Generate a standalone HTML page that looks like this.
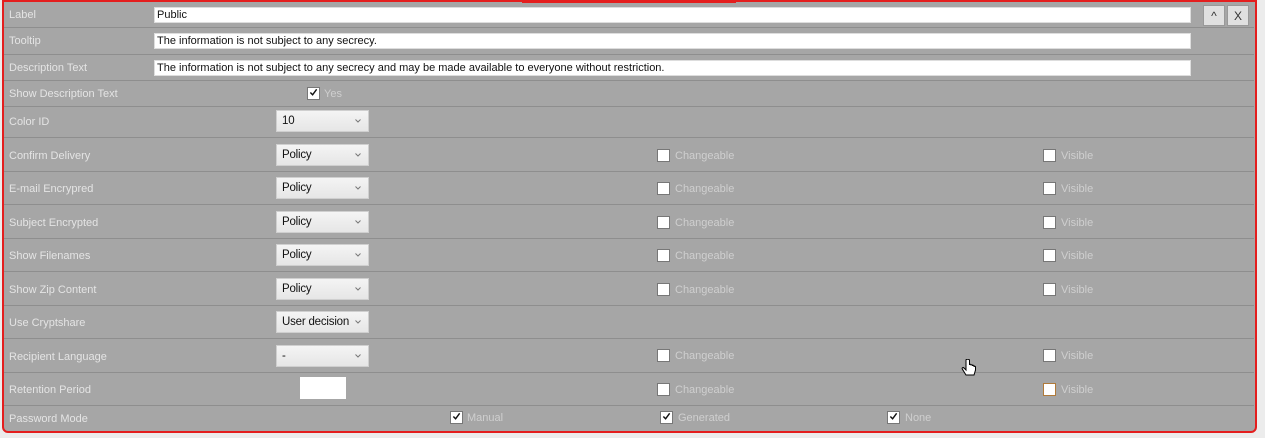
<!DOCTYPE html>
<html><head><style>
body{margin:0;width:1265px;height:438px;background:#ececec;position:relative;overflow:hidden;font-family:"Liberation Sans",sans-serif;}
.panel{position:absolute;left:2px;top:0;width:1251px;height:429px;background:#a6a6a6;border:2px solid #e41e1e;border-radius:0 0 6px 6px;}
.sep{position:absolute;left:4px;width:1250px;height:1px;background:#8e8e8e;}
.lbl{position:absolute;left:9px;font-size:11px;color:#e4e4e4;transform:translateY(-40%);white-space:nowrap;}
.inp{position:absolute;left:154px;width:1037px;background:#fff;border:1px solid #ddd;font-size:11px;color:#111;line-height:15px;padding-left:2px;box-sizing:border-box;height:16px;}
.sel{position:absolute;left:276px;width:93px;height:22px;background:linear-gradient(#f4f4f4,#e6e6e6);border:1px solid #cfcfcf;box-sizing:border-box;font-size:11.5px;color:#111;line-height:20px;padding-left:5px;letter-spacing:-0.2px;}
.sel svg{position:absolute;right:7px;top:8px;}
.cb{position:absolute;width:11px;height:11px;background:#fff;border:1px solid #777;}
.cbt{position:absolute;font-size:11px;color:#cfcfcf;white-space:nowrap;margin-top:1px;}
.chk{position:absolute;left:1px;top:0;width:9px;height:9px;}
.btn{position:absolute;top:5px;width:22px;height:21px;background:#e0e0e0;border:1px solid #999;box-sizing:border-box;font-size:12px;color:#333;text-align:center;line-height:20px;}
</style></head><body>
<div style="position:absolute;left:522px;top:0;width:210px;height:1px;border:2px solid #e41e1e;border-top:none;z-index:3"></div>
<div class="panel"></div>
<div class="sep" style="top:27px"></div><div class="sep" style="top:54px"></div><div class="sep" style="top:80px"></div><div class="sep" style="top:106px"></div><div class="sep" style="top:137px"></div><div class="sep" style="top:171px"></div><div class="sep" style="top:204px"></div><div class="sep" style="top:238px"></div><div class="sep" style="top:271px"></div><div class="sep" style="top:305px"></div><div class="sep" style="top:338px"></div><div class="sep" style="top:372px"></div><div class="sep" style="top:405px"></div>

<div class="lbl" style="top:14px">Label</div>
<div class="lbl" style="top:40px">Tooltip</div>
<div class="lbl" style="top:67px">Description Text</div>
<div class="lbl" style="top:93px">Show Description Text</div>
<div class="lbl" style="top:121px">Color ID</div>
<div class="lbl" style="top:155px">Confirm Delivery</div>
<div class="lbl" style="top:188px">E-mail Encrypred</div>
<div class="lbl" style="top:222px">Subject Encrypted</div>
<div class="lbl" style="top:255px">Show Filenames</div>
<div class="lbl" style="top:289px">Show Zip Content</div>
<div class="lbl" style="top:322px">Use Cryptshare</div>
<div class="lbl" style="top:356px">Recipient Language</div>
<div class="lbl" style="top:389px">Retention Period</div>
<div class="lbl" style="top:418px">Password Mode</div>

<div class="inp" style="top:7px">Public</div>
<div class="inp" style="top:33px">The information is not subject to any secrecy.</div>
<div class="inp" style="top:60px">The information is not subject to any secrecy and may be made available to everyone without restriction.</div>
<div class="btn" style="left:1203px">^</div><div class="btn" style="left:1227px">X</div>

<div class="cb" style="left:307px;top:87px"><svg class="chk" viewBox="0 0 10 10"><path d="M1.5 5L4 7.5L8.5 1.5" stroke="#111" stroke-width="1.6" fill="none"/></svg></div><div class="cbt" style="left:324px;top:87px">Yes</div>

<div class="sel" style="top:110px">10<svg width="6" height="4"><path d="M0.5 0.5L3 3L5.5 0.5" stroke="#777" fill="none"/></svg></div>
<div class="sel" style="top:144px">Policy<svg width="6" height="4"><path d="M0.5 0.5L3 3L5.5 0.5" stroke="#777" fill="none"/></svg></div>
<div class="sel" style="top:177px">Policy<svg width="6" height="4"><path d="M0.5 0.5L3 3L5.5 0.5" stroke="#777" fill="none"/></svg></div>
<div class="sel" style="top:211px">Policy<svg width="6" height="4"><path d="M0.5 0.5L3 3L5.5 0.5" stroke="#777" fill="none"/></svg></div>
<div class="sel" style="top:244px">Policy<svg width="6" height="4"><path d="M0.5 0.5L3 3L5.5 0.5" stroke="#777" fill="none"/></svg></div>
<div class="sel" style="top:278px">Policy<svg width="6" height="4"><path d="M0.5 0.5L3 3L5.5 0.5" stroke="#777" fill="none"/></svg></div>
<div class="sel" style="top:311px">User decision<svg width="6" height="4"><path d="M0.5 0.5L3 3L5.5 0.5" stroke="#777" fill="none"/></svg></div>
<div class="sel" style="top:345px">-<svg width="6" height="4"><path d="M0.5 0.5L3 3L5.5 0.5" stroke="#777" fill="none"/></svg></div>
<div style="position:absolute;left:300px;top:377px;width:46px;height:22px;background:#fff"></div>

<div class="cb" style="left:657px;top:149px"></div><div class="cbt" style="left:675px;top:149px">Changeable</div><div class="cb" style="left:1043px;top:149px"></div><div class="cbt" style="left:1061px;top:149px">Visible</div>
<div class="cb" style="left:657px;top:182px"></div><div class="cbt" style="left:675px;top:182px">Changeable</div><div class="cb" style="left:1043px;top:182px"></div><div class="cbt" style="left:1061px;top:182px">Visible</div>
<div class="cb" style="left:657px;top:216px"></div><div class="cbt" style="left:675px;top:216px">Changeable</div><div class="cb" style="left:1043px;top:216px"></div><div class="cbt" style="left:1061px;top:216px">Visible</div>
<div class="cb" style="left:657px;top:249px"></div><div class="cbt" style="left:675px;top:249px">Changeable</div><div class="cb" style="left:1043px;top:249px"></div><div class="cbt" style="left:1061px;top:249px">Visible</div>
<div class="cb" style="left:657px;top:283px"></div><div class="cbt" style="left:675px;top:283px">Changeable</div><div class="cb" style="left:1043px;top:283px"></div><div class="cbt" style="left:1061px;top:283px">Visible</div>
<div class="cb" style="left:657px;top:349px"></div><div class="cbt" style="left:675px;top:349px">Changeable</div><div class="cb" style="left:1043px;top:349px"></div><div class="cbt" style="left:1061px;top:349px">Visible</div>
<div class="cb" style="left:657px;top:383px"></div><div class="cbt" style="left:675px;top:383px">Changeable</div><div class="cb" style="left:1043px;top:383px;border-color:#b07a3a"></div><div class="cbt" style="left:1061px;top:383px">Visible</div>

<div class="cb" style="left:450px;top:411px"><svg class="chk" viewBox="0 0 10 10"><path d="M1.5 5L4 7.5L8.5 1.5" stroke="#111" stroke-width="1.6" fill="none"/></svg></div><div class="cbt" style="left:467px;top:411px">Manual</div>
<div class="cb" style="left:660px;top:411px"><svg class="chk" viewBox="0 0 10 10"><path d="M1.5 5L4 7.5L8.5 1.5" stroke="#111" stroke-width="1.6" fill="none"/></svg></div><div class="cbt" style="left:678px;top:411px">Generated</div>
<div class="cb" style="left:887px;top:411px"><svg class="chk" viewBox="0 0 10 10"><path d="M1.5 5L4 7.5L8.5 1.5" stroke="#111" stroke-width="1.6" fill="none"/></svg></div><div class="cbt" style="left:905px;top:411px">None</div>

<svg style="position:absolute;left:961px;top:359px" width="16" height="20" viewBox="0 0 16 20"><path d="M5 1v10l-2-2c-1-1-2.5 0-1.6 1.2L5 16h8l1.5-5V8c0-1-1.5-1-1.5 0V7c0-1-1.5-1-1.5 0V6.5c0-1-1.5-1-1.5 0V6c0-1-1.5-1-1.5 0V1C8 0 5 0 5 1z" fill="#fff" stroke="#000" stroke-width="1"/></svg>
</body></html>
